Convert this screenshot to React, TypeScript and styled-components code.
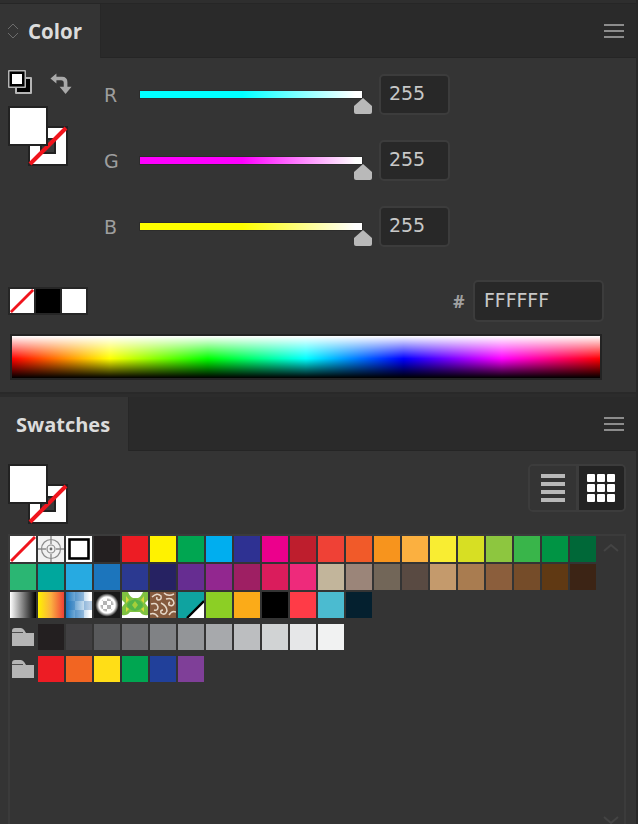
import React from "react";
import styled, { createGlobalStyle } from "styled-components";

const Global = createGlobalStyle`
  html, body { margin: 0; padding: 0; background: #343434; }
  #root { width: 638px; height: 824px; overflow: hidden; }
  * { box-sizing: border-box; }
`;

const Frame = styled.div`
  width: 638px;
  height: 824px;
  background: #343434;
  border-right: 2px solid #282828;
  display: flex;
  flex-direction: column;
  font-family: "DejaVu Sans", sans-serif;
  overflow: hidden;
`;

const TopStrip = styled.div`
  height: 4px;
  flex: none;
  background: #2e2e2e;
  border-bottom: 1px solid #262626;
`;

const TabBar = styled.div`
  height: 54px;
  flex: none;
  display: flex;
  align-items: stretch;
  background: #2a2a2a;
  border-bottom: 1px solid #252525;
`;

const Tab = styled.div<{ $w: number; $pad: number; $size: number }>`
  width: ${(p) => p.$w}px;
  padding-left: ${(p) => p.$pad}px;
  margin-bottom: -1px;
  background: #343434;
  border-right: 1px solid #272727;
  display: flex;
  align-items: center;
  position: relative;
  color: #dcdcdc;
  font-family: "Open Sans", sans-serif;
  font-size: ${(p) => p.$size}px;
  font-weight: 700;
`;

const Stepper = styled.svg`
  position: absolute;
  left: 7px;
  top: 19px;
`;

const Spacer = styled.div`
  flex: 1;
`;

const MenuButton = styled.div`
  width: 20px;
  margin-right: 12px;
  display: flex;
  flex-direction: column;
  justify-content: center;
  gap: 4px;
`;

const MenuLine = styled.span`
  height: 2px;
  background: #8c8c8c;
`;

const ColorBody = styled.div`
  height: 334px;
  flex: none;
  padding: 12px 0 0 8px;
  display: flex;
  flex-direction: column;
`;

const TopRow = styled.div`
  height: 210px;
  flex: none;
  display: flex;
`;

const LeftCol = styled.div`
  width: 96px;
  flex: none;
  display: flex;
  flex-direction: column;
  gap: 12px;
`;

const IconRow = styled.div`
  height: 24px;
  display: flex;
  gap: 18px;
`;

const FillStroke = styled.div`
  width: 60px;
  height: 60px;
  position: relative;
  flex: none;
`;

const StrokeBox = styled.svg`
  position: absolute;
  left: 20px;
  top: 20px;
`;

const FillBox = styled.div`
  position: absolute;
  left: 0;
  top: 0;
  width: 40px;
  height: 40px;
  background: #fff;
  border: 2px solid #222;
`;

const Sliders = styled.div`
  padding-top: 4px;
  display: flex;
  flex-direction: column;
  gap: 25px;
`;

const SliderRow = styled.div`
  height: 41px;
  display: flex;
`;

const ChannelLabel = styled.div`
  width: 36px;
  color: #9e9e9e;
  font-size: 19px;
  line-height: 42px;
`;

const TrackArea = styled.div`
  width: 239px;
  padding-top: 16px;
  position: relative;
`;

const Track = styled.div<{ $c: string }>`
  width: 224px;
  height: 9px;
  margin-left: -1px;
  border: 1px solid #2c2c2c;
  background: linear-gradient(to right, ${(p) => p.$c} 0%, ${(p) => p.$c} 46%, #fff 97%);
`;

const Thumb = styled.svg`
  position: absolute;
  left: 214px;
  top: 24px;
`;

const Field = styled.div<{ $w: number; $h: number; $pad: number; $lift: number }>`
  width: ${(p) => p.$w}px;
  height: ${(p) => p.$h}px;
  padding-left: ${(p) => p.$pad}px;
  padding-bottom: ${(p) => p.$lift}px;
  background: #282828;
  border: 2px solid #3c3c3c;
  border-radius: 5px;
  color: #c8c8c8;
  font-size: 19px;
  letter-spacing: -0.1px;
  display: flex;
  align-items: center;
  flex: none;
`;

const HexRow = styled.div`
  height: 42px;
  flex: none;
  display: flex;
  align-items: center;
`;

const MiniSwatches = styled.div`
  width: 80px;
  height: 28px;
  padding: 2px;
  background: #262626;
  display: flex;
  gap: 2px;
`;

const MiniCell = styled.div<{ $c: string }>`
  width: 24px;
  height: 24px;
  background: ${(p) => p.$c};
  flex: none;
`;

const Hash = styled.div`
  margin-left: 365px;
  width: 20px;
  color: #a0a0a0;
  font-family: "Open Sans", sans-serif;
  font-weight: 700;
  font-size: 18px;
`;

const Spectrum = styled.div`
  margin: 12px 0 0 2px;
  width: 592px;
  height: 46px;
  flex: none;
  border: 2px solid #232323;
  background:
    linear-gradient(to bottom, #fff 0%, rgba(255,255,255,0) 54%, rgba(0,0,0,0) 54%, #000 100%),
    linear-gradient(to right, #f00 0%, #ff0 16.6%, #0f0 33.3%, #0ff 50%, #00f 66.6%, #f0f 83.3%, #f00 100%);
`;

const Divider = styled.div`
  height: 5px;
  flex: none;
  background: #2c2c2c;
  border-top: 2px solid #292929;
`;

const SwatchBody = styled.div`
  flex: 1;
  min-height: 0;
  padding: 13px 10px 0 8px;
  display: flex;
  flex-direction: column;
`;

const SwatchHead = styled.div`
  height: 70px;
  flex: none;
  display: flex;
  justify-content: space-between;
`;

const ViewToggle = styled.div`
  width: 98px;
  height: 48px;
  border: 2px solid #3c3c3c;
  border-radius: 5px;
  display: flex;
  overflow: hidden;
`;

const ViewButton = styled.div<{ $active?: boolean }>`
  flex: 1;
  background: ${(p) => (p.$active ? "#232323" : "#343434")};
  border-left: ${(p) => (p.$active ? "3px solid #3c3c3c" : "0")};
  display: flex;
  align-items: center;
  justify-content: center;
`;

const ListLines = styled.div`
  width: 24px;
  display: flex;
  flex-direction: column;
  gap: 4px;
`;

const ListLine = styled.span`
  height: 4px;
  background: #b8b8b8;
`;

const Dots = styled.div`
  display: grid;
  grid-template-columns: repeat(3, 8px);
  grid-auto-rows: 8px;
  gap: 2px;
`;

const Dot = styled.span`
  background: #fff;
  border-radius: 1px;
`;

const LibraryBox = styled.div`
  flex: 1;
  min-height: 0;
  border: 2px solid #3b3b3b;
  border-bottom: 0;
  display: flex;
`;

const Grid = styled.div`
  width: 588px;
  flex: none;
  display: flex;
  flex-direction: column;
`;

const Row = styled.div<{ $gapTop: number }>`
  display: flex;
  gap: 2px;
  margin-top: ${(p) => p.$gapTop}px;
`;

const Cell = styled.div<{ $bg?: string }>`
  width: 26px;
  height: 26px;
  flex: none;
  background: ${(p) => p.$bg ?? "transparent"};
  overflow: hidden;
`;

const FolderCell = styled.div`
  width: 26px;
  height: 26px;
  flex: none;
  display: flex;
  align-items: center;
  justify-content: center;
`;

const ScrollTrack = styled.div`
  flex: 1;
  display: flex;
  flex-direction: column;
  justify-content: space-between;
  align-items: center;
  padding: 8px 0 0;
`;

const checker = "repeating-conic-gradient(#b9cfe6 0 25%, #fff 0 50%) 0 0 / 18px 18px";

const Pictures: Record<string, string> = {
  gray: "linear-gradient(to right, #fff, #000)",
  sun: "linear-gradient(to right, #fff200, #fbb040 50%, #ef4136)",
  blue: `linear-gradient(to right, #1c75bc, rgba(39,170,225,0) 92%), ${checker}`,
};

const row1 = ["#231f20","#ed1c24","#fff200","#00a651","#00aeef","#2e3192","#ec008c","#be1e2d","#ef4136","#f15a29","#f7941d","#fbb040","#f9ed32","#d7df23","#8dc63f","#39b54a","#009444","#006838"];
const row2 = ["#2bb673","#00a79d","#27aae1","#1c75bc","#2b3990","#262262","#662d91","#92278f","#9e1f63","#da1c5c","#ee2a7b","#c2b59b","#9b8579","#726658","#594a42","#c49a6c","#a97c50","#8b5e3c","#754c29","#603913","#3c2415"];
const row3 = ["#8ccf25","#fbab18","#000000","#ff3b47","#4bbbd0","#04202f"];
const grays = ["#231f20","#414042","#58595b","#6d6e71","#808285","#939598","#a7a9ac","#bcbec0","#d1d3d4","#e6e7e8","#f1f2f2"];
const brights = ["#ed1c24","#f26522","#ffde17","#00a651","#21409a","#7f3f98"];

const Hamburger = () => (
  <MenuButton>
    <MenuLine />
    <MenuLine />
    <MenuLine />
  </MenuButton>
);

const NoneSlash = ({ size }: { size: number }) => (
  <svg width={size} height={size} viewBox="0 0 26 26" style={{ display: "block" }}>
    <rect width="26" height="26" fill="#fff" />
    <line x1="1" y1="25" x2="25" y2="1" stroke="#f0141c" strokeWidth="3" />
  </svg>
);

const StrokeSwatch = () => (
  <StrokeBox width="40" height="40" viewBox="0 0 40 40">
    <rect width="40" height="40" fill="#222" />
    <rect x="2" y="2" width="36" height="36" fill="#fff" />
    <rect x="13" y="13" width="14" height="14" fill="#3a3a3a" stroke="#222" strokeWidth="2" />
    <line x1="2" y1="38" x2="38" y2="2" stroke="#f0141c" strokeWidth="4" />
  </StrokeBox>
);

const FillStrokePair = () => (
  <FillStroke>
    <StrokeSwatch />
    <FillBox />
  </FillStroke>
);

const DefaultColors = () => (
  <svg width="24" height="24" viewBox="0 0 24 24">
    <rect x="7" y="7" width="17" height="17" rx="1" fill="#b5b5b5" />
    <rect x="9" y="9" width="13" height="13" fill="#000" />
    <rect x="0" y="0" width="18" height="18" rx="1" fill="#b5b5b5" />
    <rect x="1.5" y="1.5" width="15" height="15" fill="#000" />
    <rect x="4" y="4" width="10" height="10" fill="#fff" />
  </svg>
);

const SwapArrow = () => (
  <svg width="22" height="22" viewBox="0 0 24 24" style={{ marginTop: 3 }}>
    <path d="M0.5 6 L7 0.5 V4 H13 Q19 4 19 10 V15 H23.5 L17 23 L10.5 15 H15 V11 Q15 8 12 8 H7 V11.5 Z" fill="#a9a9a9" />
  </svg>
);

const ThumbIcon = () => (
  <Thumb width="18" height="16" viewBox="0 0 18 16">
    <path d="M9 0 L18 8 V14 Q18 16 16 16 H2 Q0 16 0 14 V8 Z" fill="#b9b9b9" />
  </Thumb>
);

const Channel = ({ label, color }: { label: string; color: string }) => (
  <SliderRow>
    <ChannelLabel>{label}</ChannelLabel>
    <TrackArea>
      <Track $c={color} />
      <ThumbIcon />
    </TrackArea>
    <Field $w={71} $h={41} $pad={8} $lift={4}>255</Field>
  </SliderRow>
);

const TargetIcon = () => (
  <svg width="26" height="26" viewBox="0 0 26 26" style={{ display: "block" }}>
    <rect width="26" height="26" fill="#f1f1f1" />
    <circle cx="13" cy="13" r="9.5" fill="none" stroke="#8a8a8a" strokeWidth="1.2" />
    <circle cx="13" cy="13" r="4" fill="none" stroke="#8a8a8a" strokeWidth="1.2" />
    <circle cx="13" cy="13" r="1.4" fill="#666" />
    <path d="M0 13 H8 M18 13 H26 M13 0 V8 M13 18 V26" stroke="#8a8a8a" strokeWidth="1.4" />
  </svg>
);

const RegisterIcon = () => (
  <svg width="26" height="26" viewBox="0 0 26 26" style={{ display: "block" }}>
    <rect width="26" height="26" fill="#fff" />
    <rect x="3.5" y="3.5" width="19" height="19" fill="#fff" stroke="#000" strokeWidth="2.6" />
  </svg>
);

const RadialIcon = () => (
  <svg width="26" height="26" viewBox="0 0 26 26" style={{ display: "block" }}>
    <defs>
      <radialGradient id="halo">
        <stop offset="0.42" stopColor="#fff" stopOpacity="0" />
        <stop offset="0.56" stopColor="#fff" stopOpacity="1" />
        <stop offset="0.62" stopColor="#fff" stopOpacity="1" />
        <stop offset="0.9" stopColor="#fff" stopOpacity="0" />
      </radialGradient>
      <pattern id="chk" width="8" height="8" patternUnits="userSpaceOnUse" x="1" y="1">
        <rect width="8" height="8" fill="#fff" />
        <rect width="4" height="4" fill="#b4b4b4" />
        <rect x="4" y="4" width="4" height="4" fill="#b4b4b4" />
      </pattern>
    </defs>
    <rect width="26" height="26" fill="#1a1a1a" />
    <circle cx="13" cy="13" r="8" fill="url(#chk)" />
    <circle cx="13" cy="13" r="13" fill="url(#halo)" />
  </svg>
);

const FoliageIcon = () => (
  <svg width="26" height="26" viewBox="0 0 26 26" style={{ display: "block" }}>
    <rect width="26" height="26" fill="#7fc241" />
    <path d="M6 0 H21 Q19 5 16 6 H11 Q8 5 6 0 Z" fill="#fff" />
    <path d="M0 26 V23 Q5 24 8 20 H18 Q21 24 26 23 V26 Z" fill="#fff" />
    <path d="M0 8 L3 11 L0 15 Z M26 8 L23 11 L26 15 Z" fill="#fff" />
    <path d="M13 7 Q20 9 21 13 Q20 18 13 19 Q6 18 5 13 Q6 9 13 7 Z" fill="#55b548" />
    <path d="M13 9 L16 13 L13 17 L10 13 Z" fill="#a5cf3a" />
    <path d="M4 4 L7 8 L4 11 Z M22 4 L19 8 L22 11 Z M4 15 L7 17 L4 20 Z M22 15 L19 17 L22 20 Z" fill="#dcd83a" />
  </svg>
);

const ScrollIcon = () => (
  <svg width="26" height="26" viewBox="0 0 26 26" style={{ display: "block" }}>
    <rect width="26" height="26" fill="#855a3d" />
    <g fill="none" stroke="#e6d8c8" strokeWidth="1.5">
      <path d="M2 5 Q7 0 11 4 Q12 8 8 8 Q6 7 7 5" />
      <path d="M14 1 Q18 5 24 2" />
      <path d="M16 7 Q23 5 24 11 Q23 15 19 13 Q18 11 20 10" />
      <path d="M11 11 Q17 14 17 19 Q15 24 11 21 Q10 18 13 18" />
      <path d="M1 12 Q7 10 8 15 Q8 19 4 18" />
      <path d="M0 22 Q5 20 8 25" />
      <path d="M19 23 Q22 18 26 20" />
    </g>
  </svg>
);

const WedgeIcon = () => (
  <svg width="26" height="26" viewBox="0 0 26 26" style={{ display: "block" }}>
    <rect width="26" height="26" fill="#0fa3a0" />
    <path d="M26 10 V26 H10 Z" fill="#fff" />
    <path d="M9 26 L26 9" stroke="#000" strokeWidth="2.4" />
  </svg>
);

const FolderIcon = () => (
  <svg width="22" height="18" viewBox="0 0 22 18" style={{ display: "block" }}>
    <path d="M0 3 Q0 0 3 0 H9 Q11 0 12.5 2.5 L14 5 H22 V18 H0 Z" fill="#b5b5b5" />
    <path d="M0 4.5 H11" stroke="#343434" strokeWidth="0.8" fill="none" />
  </svg>
);

const Chevron = ({ up }: { up?: boolean }) => (
  <svg width="16" height="8" viewBox="0 0 16 8">
    <path d={up ? "M1 7 L8 1 L15 7" : "M1 1 L8 7 L15 1"} fill="none" stroke="#444" strokeWidth="2" />
  </svg>
);

export default function App() {
  return (
    <Frame>
      <Global />
      <TopStrip />
      <TabBar>
        <Tab $w={101} $pad={28} $size={20.5}>
          <Stepper width="12" height="16" viewBox="0 0 12 16">
            <path d="M1 6 L6 1 L11 6 M1 10 L6 15 L11 10" fill="none" stroke="#6c6c6c" strokeWidth="1" />
          </Stepper>
          Color
        </Tab>
        <Spacer />
        <Hamburger />
      </TabBar>
      <ColorBody>
        <TopRow>
          <LeftCol>
            <IconRow>
              <DefaultColors />
              <SwapArrow />
            </IconRow>
            <FillStrokePair />
          </LeftCol>
          <Sliders>
            <Channel label="R" color="#00ffff" />
            <Channel label="G" color="#ff00ff" />
            <Channel label="B" color="#ffff00" />
          </Sliders>
        </TopRow>
        <HexRow>
          <MiniSwatches>
            <MiniCell $c="#fff"><NoneSlash size={24} /></MiniCell>
            <MiniCell $c="#000" />
            <MiniCell $c="#fff" />
          </MiniSwatches>
          <Hash>#</Hash>
          <Field $w={131} $h={42} $pad={9} $lift={2}>FFFFFF</Field>
        </HexRow>
        <Spectrum />
      </ColorBody>
      <Divider />
      <TabBar>
        <Tab $w={129} $pad={16} $size={20}>Swatches</Tab>
        <Spacer />
        <Hamburger />
      </TabBar>
      <SwatchBody>
        <SwatchHead>
          <FillStrokePair />
          <ViewToggle>
            <ViewButton>
              <ListLines>
                <ListLine /><ListLine /><ListLine /><ListLine />
              </ListLines>
            </ViewButton>
            <ViewButton $active>
              <Dots>
                {Array.from({ length: 9 }, (_, i) => <Dot key={i} />)}
              </Dots>
            </ViewButton>
          </ViewToggle>
        </SwatchHead>
        <LibraryBox>
          <Grid>
            <Row $gapTop={0}>
              <Cell><NoneSlash size={26} /></Cell>
              <Cell><TargetIcon /></Cell>
              <Cell><RegisterIcon /></Cell>
              {row1.map((c, i) => <Cell key={i} $bg={c} />)}
            </Row>
            <Row $gapTop={2}>
              {row2.map((c, i) => <Cell key={i} $bg={c} />)}
            </Row>
            <Row $gapTop={2}>
              <Cell $bg={Pictures.gray} />
              <Cell $bg={Pictures.sun} />
              <Cell $bg={Pictures.blue} />
              <Cell><RadialIcon /></Cell>
              <Cell><FoliageIcon /></Cell>
              <Cell><ScrollIcon /></Cell>
              <Cell><WedgeIcon /></Cell>
              {row3.map((c, i) => <Cell key={i} $bg={c} />)}
            </Row>
            <Row $gapTop={6}>
              <FolderCell><FolderIcon /></FolderCell>
              {grays.map((c, i) => <Cell key={i} $bg={c} />)}
            </Row>
            <Row $gapTop={6}>
              <FolderCell><FolderIcon /></FolderCell>
              {brights.map((c, i) => <Cell key={i} $bg={c} />)}
            </Row>
          </Grid>
          <ScrollTrack>
            <Chevron up />
            <Chevron />
          </ScrollTrack>
        </LibraryBox>
      </SwatchBody>
    </Frame>
  );
}
